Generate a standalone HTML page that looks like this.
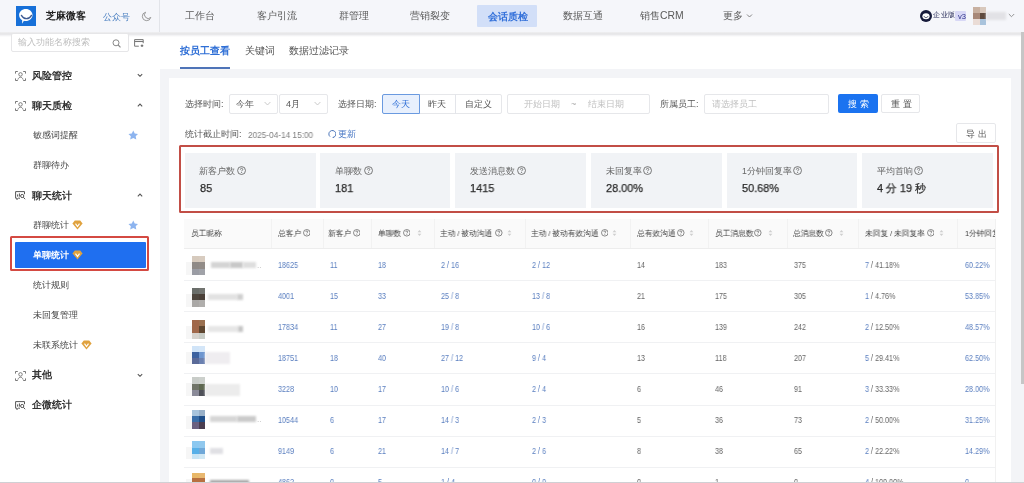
<!DOCTYPE html><html><head><meta charset="utf-8"><style>
*{box-sizing:border-box;margin:0;padding:0}
html,body{width:1024px;height:483px;overflow:hidden;background:#fff;font-family:"Liberation Sans",sans-serif;color:#333}
.a{position:absolute;white-space:nowrap;line-height:1;will-change:transform}
.r{position:absolute}
#hdr{position:absolute;left:0;top:0;width:1024px;height:32px;background:#f5f6fa}
#hsh{position:absolute;left:0;top:31.5px;width:1024px;height:5px;background:linear-gradient(rgba(225,225,228,0.5) 0%,#e4e4e6 40%,rgba(235,235,238,0.6) 70%,rgba(255,255,255,0) 100%)}
#side{position:absolute;left:0;top:32px;width:160px;height:451px;background:#fff}
#tabs{position:absolute;left:160px;top:32px;width:864px;height:37px;background:#fff}
#gray{position:absolute;left:160px;top:69px;width:864px;height:414px;background:#f3f4f7}
#card{position:absolute;left:169px;top:78px;width:842px;height:410px;background:#fff}
#sb{display:none}
#thumb{position:absolute;left:1021px;top:32px;width:3px;height:352px;background:#c6c6c6}
#bot{position:absolute;left:0;top:481.5px;width:1024px;height:1.5px;background:#d0d0d4}
.nav{font-size:10.4px;color:#5a5a5a}
.grp{font-size:10px;font-weight:600;color:#333}
.sub{font-size:9px;color:#474747}
.lbl{font-size:9px;color:#555}
.box{position:absolute;border:1px solid #e6e7ea;border-radius:2px;background:#fff}
.stat{position:absolute;width:130.5px;height:55px;background:#f1f3f6}
.stl{font-size:8.7px;color:#666}
.stv{font-size:11.2px;color:#2a2a2a;transform:scaleX(0.975);transform-origin:0 0;-webkit-text-stroke:0.25px #2a2a2a}
.th{font-size:7.6px;color:#3c3c3c;font-weight:500;transform:scaleX(0.965);transform-origin:0 0}
.td{font-size:8.2px;color:#666;transform:scaleX(0.88);transform-origin:0 0}
.bl{color:#5a7fc0}
</style></head><body>
<div id="hdr"></div><div id="side"></div><div id="tabs"></div><div id="gray"></div><div id="card"></div>
<svg class="r" style="left:16px;top:6px" width="20" height="20" viewBox="0 0 20 20">
<rect width="20" height="20" fill="#1770d8"/>
<path d="M9.8 3c3.7 0 6.7 2.7 6.7 6s-3 6-6.7 6c-.7 0-1.3-.1-1.9-.3L6.1 17.8l.1-3.6C4.3 13.1 3.1 11.2 3.1 9c0-3.3 3-6 6.7-6z" fill="#fff"/>
<path d="M5.4 9.4c1.3 2.3 3.1 3.3 5 3.3s3.8-1 5.1-3.3" stroke="#3d5a92" stroke-width="1.3" fill="none" stroke-linecap="round"/>
</svg>
<div class="a grp" style="left:46px;top:10.5px;font-size:10px;color:#222">芝麻微客</div>
<div class="a " style="left:103px;top:12.7px;font-size:8.5px;color:#4a7fc0">公众号</div>
<svg class="r" style="left:141px;top:11px" width="11" height="11" viewBox="0 0 11 11">
<path d="M4.6 1.2A4.3 4.3 0 1 0 9.8 6.4 3.4 3.4 0 0 1 4.6 1.2z" fill="none" stroke="#9a9a9a" stroke-width="1"/>
</svg>
<div class="r" style="left:159px;top:0;width:1px;height:32px;background:#e2e4e9"></div>
<div class="r" style="left:477px;top:5.2px;width:60.4px;height:21.6px;background:#d2dff8;border-radius:1px"></div>
<div class="a nav" style="left:185.1px;top:11.2px;">工作台</div>
<div class="a nav" style="left:256.7px;top:11.2px;">客户引流</div>
<div class="a nav" style="left:338.5px;top:11.2px;">群管理</div>
<div class="a nav" style="left:410.4px;top:11.2px;">营销裂变</div>
<div class="a nav" style="left:488px;top:11.5px;color:#3572da;font-weight:bold;font-size:10px">会话质检</div>
<div class="a nav" style="left:563.4000000000001px;top:11.2px;">数据互通</div>
<div class="a nav" style="left:640.4000000000001px;top:11.2px;">销售CRM</div>
<div class="a nav" style="left:722.5px;top:11.2px;">更多</div>
<svg class="r" style="left:746px;top:13px" width="7" height="6" viewBox="0 0 7 6"><path d="M1 1.5l2.5 2.5L6 1.5" fill="none" stroke="#777" stroke-width="0.9"/></svg>
<svg class="r" style="left:920px;top:10px" width="12" height="12" viewBox="0 0 12 12">
<circle cx="6" cy="6" r="6" fill="#161a3a"/><ellipse cx="6" cy="6.2" rx="3.6" ry="3" fill="#fff"/>
<path d="M3.9 6.2c.6 1 1.3 1.4 2.1 1.4s1.5-.4 2.1-1.4" stroke="#161a3a" stroke-width=".8" fill="none"/></svg>
<div class="a " style="left:933.2px;top:12.3px;font-size:6.8px;color:#1c2050;font-weight:500;letter-spacing:0.55px">企业版</div>
<div class="r" style="left:955px;top:11.1px;width:11.2px;height:10.1px;background:#d8d8f6;border-radius:1px"></div>
<div class="a " style="left:957.8px;top:12.6px;font-size:7.6px;color:#2c3088">v3</div>
<div class="r" style="left:973px;top:7px;width:13px;height:18px;overflow:hidden;filter:blur(0.4px)">
<div class="r" style="left:0;top:0;width:7px;height:6px;background:#c8b0a0"></div>
<div class="r" style="left:7px;top:0;width:6px;height:6px;background:#d8c8bc"></div>
<div class="r" style="left:0;top:6px;width:7px;height:6px;background:#a88878"></div>
<div class="r" style="left:7px;top:6px;width:6px;height:6px;background:#5e4a3e"></div>
<div class="r" style="left:0;top:12px;width:7px;height:6px;background:#eadcd6"></div>
<div class="r" style="left:7px;top:12px;width:6px;height:6px;background:#a9c3dc"></div>
</div>
<div class="r" style="left:986px;top:12px;width:20px;height:8px;background:#e2e2e6;filter:blur(1px)"></div>
<svg class="r" style="left:1008px;top:13px" width="7" height="5" viewBox="0 0 7 5"><path d="M.8 1l2.7 2.7L6.2 1" fill="none" stroke="#888" stroke-width="0.9"/></svg>
<div id="hsh"></div>
<div class="box" style="left:11.2px;top:33px;width:117.4px;height:19.4px;border-color:#e6e6e8"></div>
<div class="a " style="left:18.4px;top:38px;font-size:8.8px;color:#bdbdbd">输入功能名称搜索</div>
<svg class="r" style="left:112px;top:39px" width="10" height="9" viewBox="0 0 10 9">
<circle cx="4" cy="3.8" r="3" fill="none" stroke="#888" stroke-width="1"/><path d="M6.2 6l2.3 2.3" stroke="#888" stroke-width="1.1"/></svg>
<svg class="r" style="left:133.5px;top:38.6px" width="10" height="8" viewBox="0 0 10 8"><path d="M4.8 7.2H.6V.6h8.6v3.6" fill="none" stroke="#777" stroke-width="1"/><path d="M.6 2.5h8.6" stroke="#777" stroke-width="1.1"/><path d="M8 5.4v2.6M6.7 6.7h2.6" stroke="#666" stroke-width="1.1"/></svg>
<svg class="r" style="left:14.5px;top:70.5px" width="11" height="10" viewBox="0 0 11 10">
<path d="M.5 2.6V.5h2.3M8.2.5h2.3v2.1M.5 7.4v2.1h2.3M8.2 9.5h2.3V7.4" fill="none" stroke="#6a6a6a" stroke-width="0.9"/>
<circle cx="5.5" cy="3.4" r="1.75" fill="none" stroke="#6a6a6a" stroke-width="0.85"/>
<path d="M2.9 8.6c.5-1.6 1.5-2.4 2.6-2.4s2.1.8 2.6 2.4" fill="none" stroke="#6a6a6a" stroke-width="0.85"/></svg>
<div class="a grp" style="left:32.3px;top:70.8px;">风险管控</div>
<svg class="r" style="left:137px;top:72.6px" width="6" height="4.5" viewBox="0 0 6 4.5"><path d="M.8 1.1L3 3.3l2.2-2.2" fill="none" stroke="#555" stroke-width="1.05"/></svg>
<svg class="r" style="left:14.5px;top:100.5px" width="11" height="10" viewBox="0 0 11 10">
<path d="M.5 2.6V.5h2.3M8.2.5h2.3v2.1M.5 7.4v2.1h2.3M8.2 9.5h2.3V7.4" fill="none" stroke="#6a6a6a" stroke-width="0.9"/>
<circle cx="5.5" cy="3.4" r="1.75" fill="none" stroke="#6a6a6a" stroke-width="0.85"/>
<path d="M2.9 8.6c.5-1.6 1.5-2.4 2.6-2.4s2.1.8 2.6 2.4" fill="none" stroke="#6a6a6a" stroke-width="0.85"/></svg>
<div class="a grp" style="left:32.3px;top:101.2px;">聊天质检</div>
<svg class="r" style="left:137px;top:103.2px" width="6" height="4.5" viewBox="0 0 6 4.5"><path d="M.8 3.3L3 1.1l2.2 2.2" fill="none" stroke="#555" stroke-width="1.05"/></svg>
<div class="a sub" style="left:32.5px;top:131.3px;">敏感词提醒</div>
<svg class="r" style="left:127.8px;top:130.2px" width="10.5" height="10.5" viewBox="0 0 10 10">
<path d="M5 .4l1.4 2.9 3.2.4-2.3 2.2.6 3.2L5 7.6 2.1 9.1l.6-3.2L.4 3.7l3.2-.4z" fill="#8db4ef"/></svg>
<div class="a sub" style="left:32.5px;top:161.3px;">群聊待办</div>
<svg class="r" style="left:14.8px;top:190.5px" width="11" height="9" viewBox="0 0 11 9">
<path d="M9.5 3.2V.6H.6v6.6h1.2v1.4l1.6-1.4h1.6" fill="none" stroke="#555" stroke-width="1"/>
<path d="M2.6 3.4v2.2M4.4 2.4v3.2" stroke="#555" stroke-width="1"/>
<circle cx="7.2" cy="5" r="1.6" fill="none" stroke="#555" stroke-width="1"/><path d="M8.3 6.2l1.8 2" stroke="#555" stroke-width="1"/></svg>
<div class="a grp" style="left:32.3px;top:190.8px;">聊天统计</div>
<svg class="r" style="left:137px;top:193.2px" width="6" height="4.5" viewBox="0 0 6 4.5"><path d="M.8 3.3L3 1.1l2.2 2.2" fill="none" stroke="#555" stroke-width="1.05"/></svg>
<div class="a sub" style="left:32.5px;top:221.2px;">群聊统计</div>
<svg class="r" style="left:71.5px;top:219.5px" width="11" height="10" viewBox="0 0 11 10">
<path d="M2.8.6h5.4l2.4 2.8-5.1 6-5.1-6z" fill="#e0a23e"/>
<path d="M3.5 3.6l2 3 2-3" fill="none" stroke="#fff" stroke-width="1.1"/></svg>
<svg class="r" style="left:127.8px;top:220.2px" width="10.5" height="10.5" viewBox="0 0 10 10">
<path d="M5 .4l1.4 2.9 3.2.4-2.3 2.2.6 3.2L5 7.6 2.1 9.1l.6-3.2L.4 3.7l3.2-.4z" fill="#8db4ef"/></svg>
<div class="r" style="left:10px;top:236.3px;width:139px;height:35px;border:2px solid #d44a42;border-radius:1.5px"></div>
<div class="r" style="left:15px;top:242.4px;width:130.6px;height:25.2px;background:#1f6ff0;border-radius:1px"></div>
<div class="a " style="left:32.5px;top:250.8px;font-size:9px;color:#fff;font-weight:bold">单聊统计</div>
<svg class="r" style="left:71.5px;top:249.5px" width="11" height="10" viewBox="0 0 11 10">
<path d="M2.8.6h5.4l2.4 2.8-5.1 6-5.1-6z" fill="#e0a23e"/>
<path d="M3.5 3.6l2 3 2-3" fill="none" stroke="#fff" stroke-width="1.1"/></svg>
<div class="a sub" style="left:32.7px;top:280.5px;">统计规则</div>
<div class="a sub" style="left:32.7px;top:310.5px;">未回复管理</div>
<div class="a sub" style="left:32.7px;top:340.5px;">未联系统计</div>
<svg class="r" style="left:80.5px;top:339.8px" width="11" height="10" viewBox="0 0 11 10">
<path d="M2.8.6h5.4l2.4 2.8-5.1 6-5.1-6z" fill="#e0a23e"/>
<path d="M3.5 3.6l2 3 2-3" fill="none" stroke="#fff" stroke-width="1.1"/></svg>
<svg class="r" style="left:14.5px;top:370.5px" width="11" height="10" viewBox="0 0 11 10">
<path d="M.5 2.6V.5h2.3M8.2.5h2.3v2.1M.5 7.4v2.1h2.3M8.2 9.5h2.3V7.4" fill="none" stroke="#6a6a6a" stroke-width="0.9"/>
<circle cx="5.5" cy="3.4" r="1.75" fill="none" stroke="#6a6a6a" stroke-width="0.85"/>
<path d="M2.9 8.6c.5-1.6 1.5-2.4 2.6-2.4s2.1.8 2.6 2.4" fill="none" stroke="#6a6a6a" stroke-width="0.85"/></svg>
<div class="a grp" style="left:32.3px;top:370px;">其他</div>
<svg class="r" style="left:137px;top:372.6px" width="6" height="4.5" viewBox="0 0 6 4.5"><path d="M.8 1.1L3 3.3l2.2-2.2" fill="none" stroke="#555" stroke-width="1.05"/></svg>
<svg class="r" style="left:14.8px;top:400.5px" width="11" height="9" viewBox="0 0 11 9">
<path d="M9.5 3.2V.6H.6v6.6h1.2v1.4l1.6-1.4h1.6" fill="none" stroke="#555" stroke-width="1"/>
<path d="M2.6 3.4v2.2M4.4 2.4v3.2" stroke="#555" stroke-width="1"/>
<circle cx="7.2" cy="5" r="1.6" fill="none" stroke="#555" stroke-width="1"/><path d="M8.3 6.2l1.8 2" stroke="#555" stroke-width="1"/></svg>
<div class="a grp" style="left:32.3px;top:400px;">企微统计</div>
<div class="a " style="left:179.8px;top:46.2px;font-size:10.2px;color:#2f6fd6;font-weight:bold">按员工查看</div>
<div class="r" style="left:179.6px;top:67.4px;width:50.2px;height:1.7px;background:#4f74b8"></div>
<div class="a " style="left:244.6px;top:46.2px;font-size:10.2px;color:#555">关键词</div>
<div class="a " style="left:289.3px;top:46.2px;font-size:10.2px;color:#555">数据过滤记录</div>
<div class="a lbl" style="left:185px;top:100px;">选择时间:</div>
<div class="box" style="left:228.5px;top:94px;width:49px;height:19.5px"></div>
<div class="a " style="left:235.6px;top:100px;font-size:9px;color:#555">今年</div>
<svg class="r" style="left:264px;top:101px" width="7" height="5" viewBox="0 0 7 5"><path d="M.6 1l2.9 3 2.9-3" fill="none" stroke="#c4c4c4" stroke-width=".9"/></svg>
<div class="box" style="left:278.8px;top:94px;width:49px;height:19.5px"></div>
<div class="a " style="left:285.8px;top:100px;font-size:9px;color:#555">4月</div>
<svg class="r" style="left:313.5px;top:101px" width="7" height="5" viewBox="0 0 7 5"><path d="M.6 1l2.9 3 2.9-3" fill="none" stroke="#c4c4c4" stroke-width=".9"/></svg>
<div class="a lbl" style="left:338.3px;top:100px;">选择日期:</div>
<div class="box" style="left:382px;top:94px;width:119.5px;height:19.5px"></div>
<div class="r" style="left:455px;top:94px;width:1px;height:19.5px;background:#e3e5ea"></div>
<div class="r" style="left:382px;top:94px;width:37.5px;height:19.5px;background:#e8f0fd;border:1px solid #6a9ae0;border-radius:2px 0 0 2px"></div>
<div class="a " style="left:391.5px;top:100px;font-size:9px;color:#2f6fd6">今天</div>
<div class="a " style="left:428px;top:100px;font-size:9px;color:#555">昨天</div>
<div class="a " style="left:465px;top:100px;font-size:9px;color:#555">自定义</div>
<div class="box" style="left:506.6px;top:93.6px;width:143px;height:20px"></div>
<div class="a " style="left:523.8px;top:100px;font-size:9px;color:#c0c0c0">开始日期</div>
<div class="a " style="left:570.5px;top:99.5px;font-size:9px;color:#aaa">~</div>
<div class="a " style="left:587.8px;top:100px;font-size:9px;color:#c0c0c0">结束日期</div>
<div class="a lbl" style="left:659.6px;top:100px;">所属员工:</div>
<div class="box" style="left:704px;top:94px;width:124.5px;height:19.7px"></div>
<div class="a " style="left:711.5px;top:100px;font-size:9px;color:#c0c0c0">请选择员工</div>
<div class="r" style="left:838.3px;top:94px;width:39.7px;height:19.3px;background:#1b73f0;border-radius:2px"></div>
<div class="a " style="left:848px;top:99.5px;font-size:9px;color:#fff;letter-spacing:0.3px">搜 索</div>
<div class="box" style="left:881px;top:94px;width:38.8px;height:19.3px"></div>
<div class="a " style="left:890.5px;top:99.5px;font-size:9px;color:#555;letter-spacing:0.3px">重 置</div>
<div class="a " style="left:184.8px;top:130px;font-size:9px;color:#555">统计截止时间:</div>
<div class="a " style="left:247.5px;top:130.6px;font-size:8.6px;color:#808080;transform:scaleX(0.96);transform-origin:0 0">2025-04-14 15:00</div>
<svg class="r" style="left:327.8px;top:129.8px" width="8.5" height="8.5" viewBox="0 0 8.5 8.5"><path d="M2 6.6A3.5 3.5 0 1 1 5.6 7.3" fill="none" stroke="#4a74b8" stroke-width="1"/><path d="M5.2 6.2l.9 1.7-1.7.3z" fill="#4a74b8"/></svg>
<div class="a " style="left:338px;top:130px;font-size:9px;color:#4676c4">更新</div>
<div class="box" style="left:956.3px;top:123.3px;width:39.5px;height:20.2px"></div>
<div class="a " style="left:966.4px;top:129.8px;font-size:9px;color:#555;letter-spacing:0.3px">导 出</div>
<div class="r" style="left:179.3px;top:144.9px;width:820.1px;height:68.2px;border:2.1px solid #c24e46;border-radius:1.5px"></div>
<div class="stat" style="left:185px;top:153.4px"></div>
<div class="a stl" style="left:198.5px;top:167px;">新客户数</div>
<svg class="r" style="left:236.8px;top:166.1px" width="9.1" height="9.1" viewBox="0 0 9 9"><circle cx="4.5" cy="4.5" r="3.9" fill="none" stroke="#5c5c5c" stroke-width=".8"/><path d="M3.3 3.6c0-.8.5-1.3 1.2-1.3s1.2.5 1.2 1.1c0 .8-1.1.9-1.1 1.8" fill="none" stroke="#5c5c5c" stroke-width=".8"/><circle cx="4.6" cy="6.5" r=".5" fill="#5c5c5c"/></svg>
<div class="a stv" style="left:199.6px;top:182.6px;">85</div>
<div class="stat" style="left:319.9px;top:153.4px"></div>
<div class="a stl" style="left:335.2px;top:167px;">单聊数</div>
<svg class="r" style="left:364.0px;top:166.1px" width="9.1" height="9.1" viewBox="0 0 9 9"><circle cx="4.5" cy="4.5" r="3.9" fill="none" stroke="#5c5c5c" stroke-width=".8"/><path d="M3.3 3.6c0-.8.5-1.3 1.2-1.3s1.2.5 1.2 1.1c0 .8-1.1.9-1.1 1.8" fill="none" stroke="#5c5c5c" stroke-width=".8"/><circle cx="4.6" cy="6.5" r=".5" fill="#5c5c5c"/></svg>
<div class="a stv" style="left:335.3px;top:182.6px;">181</div>
<div class="stat" style="left:455.3px;top:153.4px"></div>
<div class="a stl" style="left:470.3px;top:167px;">发送消息数</div>
<svg class="r" style="left:516.9px;top:166.1px" width="9.1" height="9.1" viewBox="0 0 9 9"><circle cx="4.5" cy="4.5" r="3.9" fill="none" stroke="#5c5c5c" stroke-width=".8"/><path d="M3.3 3.6c0-.8.5-1.3 1.2-1.3s1.2.5 1.2 1.1c0 .8-1.1.9-1.1 1.8" fill="none" stroke="#5c5c5c" stroke-width=".8"/><circle cx="4.6" cy="6.5" r=".5" fill="#5c5c5c"/></svg>
<div class="a stv" style="left:470.40000000000003px;top:182.6px;">1415</div>
<div class="stat" style="left:591.1px;top:153.4px"></div>
<div class="a stl" style="left:606.0px;top:167px;">未回复率</div>
<svg class="r" style="left:643.3px;top:166.1px" width="9.1" height="9.1" viewBox="0 0 9 9"><circle cx="4.5" cy="4.5" r="3.9" fill="none" stroke="#5c5c5c" stroke-width=".8"/><path d="M3.3 3.6c0-.8.5-1.3 1.2-1.3s1.2.5 1.2 1.1c0 .8-1.1.9-1.1 1.8" fill="none" stroke="#5c5c5c" stroke-width=".8"/><circle cx="4.6" cy="6.5" r=".5" fill="#5c5c5c"/></svg>
<div class="a stv" style="left:606.0999999999999px;top:182.6px;">28.00%</div>
<div class="stat" style="left:726.5px;top:153.4px"></div>
<div class="a stl" style="left:741.8000000000001px;top:167px;">1分钟回复率</div>
<svg class="r" style="left:792.5999999999999px;top:166.1px" width="9.1" height="9.1" viewBox="0 0 9 9"><circle cx="4.5" cy="4.5" r="3.9" fill="none" stroke="#5c5c5c" stroke-width=".8"/><path d="M3.3 3.6c0-.8.5-1.3 1.2-1.3s1.2.5 1.2 1.1c0 .8-1.1.9-1.1 1.8" fill="none" stroke="#5c5c5c" stroke-width=".8"/><circle cx="4.6" cy="6.5" r=".5" fill="#5c5c5c"/></svg>
<div class="a stv" style="left:741.9px;top:182.6px;">50.68%</div>
<div class="stat" style="left:862.1px;top:153.4px"></div>
<div class="a stl" style="left:877.0px;top:167px;">平均首响</div>
<svg class="r" style="left:913.8px;top:166.1px" width="9.1" height="9.1" viewBox="0 0 9 9"><circle cx="4.5" cy="4.5" r="3.9" fill="none" stroke="#5c5c5c" stroke-width=".8"/><path d="M3.3 3.6c0-.8.5-1.3 1.2-1.3s1.2.5 1.2 1.1c0 .8-1.1.9-1.1 1.8" fill="none" stroke="#5c5c5c" stroke-width=".8"/><circle cx="4.6" cy="6.5" r=".5" fill="#5c5c5c"/></svg>
<div class="a stv" style="left:877.0999999999999px;top:182.6px;">4 分 19 秒</div>
<div class="r" style="left:184px;top:218.8px;width:811.3px;height:30.2px;background:#fafafa;border-bottom:1px solid #ededed"></div>
<div class="r" style="left:271.3px;top:219px;width:1px;height:29px;background:#f2f2f2"></div>
<div class="r" style="left:322.5px;top:219px;width:1px;height:29px;background:#f2f2f2"></div>
<div class="r" style="left:371.2px;top:219px;width:1px;height:29px;background:#f2f2f2"></div>
<div class="r" style="left:434.1px;top:219px;width:1px;height:29px;background:#f2f2f2"></div>
<div class="r" style="left:525px;top:219px;width:1px;height:29px;background:#f2f2f2"></div>
<div class="r" style="left:630.3px;top:219px;width:1px;height:29px;background:#f2f2f2"></div>
<div class="r" style="left:708.4px;top:219px;width:1px;height:29px;background:#f2f2f2"></div>
<div class="r" style="left:787px;top:219px;width:1px;height:29px;background:#f2f2f2"></div>
<div class="r" style="left:857.6px;top:219px;width:1px;height:29px;background:#f2f2f2"></div>
<div class="r" style="left:957px;top:219px;width:1px;height:29px;background:#f2f2f2"></div>
<div class="a th" style="left:190.7px;top:229.9px;">员工昵称</div>
<div class="a th" style="left:278.2px;top:229.9px;">总客户</div>
<svg class="r" style="left:302.5px;top:229.3px" width="7.6" height="7.6" viewBox="0 0 9 9"><circle cx="4.5" cy="4.5" r="3.9" fill="none" stroke="#555" stroke-width=".8"/><path d="M3.3 3.6c0-.8.5-1.3 1.2-1.3s1.2.5 1.2 1.1c0 .8-1.1.9-1.1 1.8" fill="none" stroke="#555" stroke-width=".8"/><circle cx="4.6" cy="6.5" r=".5" fill="#555"/></svg>
<div class="a th" style="left:328.0px;top:229.9px;">新客户</div>
<svg class="r" style="left:352.7px;top:229.3px" width="7.6" height="7.6" viewBox="0 0 9 9"><circle cx="4.5" cy="4.5" r="3.9" fill="none" stroke="#555" stroke-width=".8"/><path d="M3.3 3.6c0-.8.5-1.3 1.2-1.3s1.2.5 1.2 1.1c0 .8-1.1.9-1.1 1.8" fill="none" stroke="#555" stroke-width=".8"/><circle cx="4.6" cy="6.5" r=".5" fill="#555"/></svg>
<div class="a th" style="left:378.09999999999997px;top:229.9px;">单聊数</div>
<svg class="r" style="left:402.8px;top:229.3px" width="7.6" height="7.6" viewBox="0 0 9 9"><circle cx="4.5" cy="4.5" r="3.9" fill="none" stroke="#555" stroke-width=".8"/><path d="M3.3 3.6c0-.8.5-1.3 1.2-1.3s1.2.5 1.2 1.1c0 .8-1.1.9-1.1 1.8" fill="none" stroke="#555" stroke-width=".8"/><circle cx="4.6" cy="6.5" r=".5" fill="#555"/></svg>
<svg class="r" style="left:416.8px;top:229px" width="5" height="8" viewBox="0 0 5 8"><path d="M.6 3.2L2.5 1l1.9 2.2z" fill="#cfcfcf"/><path d="M.6 4.8l1.9 2.2 1.9-2.2z" fill="#cfcfcf"/></svg>
<div class="a th" style="left:440.4px;top:229.9px;">主动 / 被动沟通</div>
<svg class="r" style="left:495.1px;top:229.3px" width="7.6" height="7.6" viewBox="0 0 9 9"><circle cx="4.5" cy="4.5" r="3.9" fill="none" stroke="#555" stroke-width=".8"/><path d="M3.3 3.6c0-.8.5-1.3 1.2-1.3s1.2.5 1.2 1.1c0 .8-1.1.9-1.1 1.8" fill="none" stroke="#555" stroke-width=".8"/><circle cx="4.6" cy="6.5" r=".5" fill="#555"/></svg>
<svg class="r" style="left:507.3px;top:229px" width="5" height="8" viewBox="0 0 5 8"><path d="M.6 3.2L2.5 1l1.9 2.2z" fill="#cfcfcf"/><path d="M.6 4.8l1.9 2.2 1.9-2.2z" fill="#cfcfcf"/></svg>
<div class="a th" style="left:530.7px;top:229.9px;">主动 / 被动有效沟通</div>
<svg class="r" style="left:600.6px;top:229.3px" width="7.6" height="7.6" viewBox="0 0 9 9"><circle cx="4.5" cy="4.5" r="3.9" fill="none" stroke="#555" stroke-width=".8"/><path d="M3.3 3.6c0-.8.5-1.3 1.2-1.3s1.2.5 1.2 1.1c0 .8-1.1.9-1.1 1.8" fill="none" stroke="#555" stroke-width=".8"/><circle cx="4.6" cy="6.5" r=".5" fill="#555"/></svg>
<svg class="r" style="left:612.4px;top:229px" width="5" height="8" viewBox="0 0 5 8"><path d="M.6 3.2L2.5 1l1.9 2.2z" fill="#cfcfcf"/><path d="M.6 4.8l1.9 2.2 1.9-2.2z" fill="#cfcfcf"/></svg>
<div class="a th" style="left:637.0px;top:229.9px;">总有效沟通</div>
<svg class="r" style="left:677.1px;top:229.3px" width="7.6" height="7.6" viewBox="0 0 9 9"><circle cx="4.5" cy="4.5" r="3.9" fill="none" stroke="#555" stroke-width=".8"/><path d="M3.3 3.6c0-.8.5-1.3 1.2-1.3s1.2.5 1.2 1.1c0 .8-1.1.9-1.1 1.8" fill="none" stroke="#555" stroke-width=".8"/><circle cx="4.6" cy="6.5" r=".5" fill="#555"/></svg>
<svg class="r" style="left:689.3px;top:229px" width="5" height="8" viewBox="0 0 5 8"><path d="M.6 3.2L2.5 1l1.9 2.2z" fill="#cfcfcf"/><path d="M.6 4.8l1.9 2.2 1.9-2.2z" fill="#cfcfcf"/></svg>
<div class="a th" style="left:715.2px;top:229.9px;">员工消息数</div>
<svg class="r" style="left:754px;top:229.3px" width="7.6" height="7.6" viewBox="0 0 9 9"><circle cx="4.5" cy="4.5" r="3.9" fill="none" stroke="#555" stroke-width=".8"/><path d="M3.3 3.6c0-.8.5-1.3 1.2-1.3s1.2.5 1.2 1.1c0 .8-1.1.9-1.1 1.8" fill="none" stroke="#555" stroke-width=".8"/><circle cx="4.6" cy="6.5" r=".5" fill="#555"/></svg>
<svg class="r" style="left:768.2px;top:229px" width="5" height="8" viewBox="0 0 5 8"><path d="M.6 3.2L2.5 1l1.9 2.2z" fill="#cfcfcf"/><path d="M.6 4.8l1.9 2.2 1.9-2.2z" fill="#cfcfcf"/></svg>
<div class="a th" style="left:793.3000000000001px;top:229.9px;">总消息数</div>
<svg class="r" style="left:825.3px;top:229.3px" width="7.6" height="7.6" viewBox="0 0 9 9"><circle cx="4.5" cy="4.5" r="3.9" fill="none" stroke="#555" stroke-width=".8"/><path d="M3.3 3.6c0-.8.5-1.3 1.2-1.3s1.2.5 1.2 1.1c0 .8-1.1.9-1.1 1.8" fill="none" stroke="#555" stroke-width=".8"/><circle cx="4.6" cy="6.5" r=".5" fill="#555"/></svg>
<svg class="r" style="left:839px;top:229px" width="5" height="8" viewBox="0 0 5 8"><path d="M.6 3.2L2.5 1l1.9 2.2z" fill="#cfcfcf"/><path d="M.6 4.8l1.9 2.2 1.9-2.2z" fill="#cfcfcf"/></svg>
<div class="a th" style="left:864.7px;top:229.9px;">未回复 / 未回复率</div>
<svg class="r" style="left:926.5px;top:229.3px" width="7.6" height="7.6" viewBox="0 0 9 9"><circle cx="4.5" cy="4.5" r="3.9" fill="none" stroke="#555" stroke-width=".8"/><path d="M3.3 3.6c0-.8.5-1.3 1.2-1.3s1.2.5 1.2 1.1c0 .8-1.1.9-1.1 1.8" fill="none" stroke="#555" stroke-width=".8"/><circle cx="4.6" cy="6.5" r=".5" fill="#555"/></svg>
<svg class="r" style="left:939.2px;top:229px" width="5" height="8" viewBox="0 0 5 8"><path d="M.6 3.2L2.5 1l1.9 2.2z" fill="#cfcfcf"/><path d="M.6 4.8l1.9 2.2 1.9-2.2z" fill="#cfcfcf"/></svg>
<div class="a th" style="left:964.9000000000001px;top:229.9px;">1分钟回复率</div>
<div class="r" style="left:995.3px;top:215px;width:16px;height:270px;background:#fff"></div>
<div class="r" style="left:995.3px;top:219px;width:1px;height:264px;background:#f1f1f1"></div>
<div class="r" style="left:184px;top:280.1px;width:811.3px;height:1px;background:#f0f1f3"></div>
<div class="a td bl" style="left:278.3px;top:261.5px;">18625</div>
<div class="a td bl" style="left:329.5px;top:261.5px;">11</div>
<div class="a td bl" style="left:378.2px;top:261.5px;">18</div>
<div class="a td bl" style="left:441.1px;top:261.5px;">2 / 16</div>
<div class="a td bl" style="left:532px;top:261.5px;">2 / 12</div>
<div class="a td" style="left:637.3px;top:261.5px;">14</div>
<div class="a td" style="left:715.4px;top:261.5px;">183</div>
<div class="a td" style="left:794px;top:261.5px;">375</div>
<div class="a td" style="left:864.6px;top:261.5px"><span class="bl">7</span> / 41.18%</div>
<div class="a td bl" style="left:965px;top:261.5px;">60.22%</div>
<div class="r" style="left:184px;top:311.23px;width:811.3px;height:1px;background:#f0f1f3"></div>
<div class="a td bl" style="left:278.3px;top:292.63px;">4001</div>
<div class="a td bl" style="left:329.5px;top:292.63px;">15</div>
<div class="a td bl" style="left:378.2px;top:292.63px;">33</div>
<div class="a td bl" style="left:441.1px;top:292.63px;">25 / 8</div>
<div class="a td bl" style="left:532px;top:292.63px;">13 / 8</div>
<div class="a td" style="left:637.3px;top:292.63px;">21</div>
<div class="a td" style="left:715.4px;top:292.63px;">175</div>
<div class="a td" style="left:794px;top:292.63px;">305</div>
<div class="a td" style="left:864.6px;top:292.63px"><span class="bl">1</span> / 4.76%</div>
<div class="a td bl" style="left:965px;top:292.63px;">53.85%</div>
<div class="r" style="left:184px;top:342.36px;width:811.3px;height:1px;background:#f0f1f3"></div>
<div class="a td bl" style="left:278.3px;top:323.76px;">17834</div>
<div class="a td bl" style="left:329.5px;top:323.76px;">11</div>
<div class="a td bl" style="left:378.2px;top:323.76px;">27</div>
<div class="a td bl" style="left:441.1px;top:323.76px;">19 / 8</div>
<div class="a td bl" style="left:532px;top:323.76px;">10 / 6</div>
<div class="a td" style="left:637.3px;top:323.76px;">16</div>
<div class="a td" style="left:715.4px;top:323.76px;">139</div>
<div class="a td" style="left:794px;top:323.76px;">242</div>
<div class="a td" style="left:864.6px;top:323.76px"><span class="bl">2</span> / 12.50%</div>
<div class="a td bl" style="left:965px;top:323.76px;">48.57%</div>
<div class="r" style="left:184px;top:373.49px;width:811.3px;height:1px;background:#f0f1f3"></div>
<div class="a td bl" style="left:278.3px;top:354.89px;">18751</div>
<div class="a td bl" style="left:329.5px;top:354.89px;">18</div>
<div class="a td bl" style="left:378.2px;top:354.89px;">40</div>
<div class="a td bl" style="left:441.1px;top:354.89px;">27 / 12</div>
<div class="a td bl" style="left:532px;top:354.89px;">9 / 4</div>
<div class="a td" style="left:637.3px;top:354.89px;">13</div>
<div class="a td" style="left:715.4px;top:354.89px;">118</div>
<div class="a td" style="left:794px;top:354.89px;">207</div>
<div class="a td" style="left:864.6px;top:354.89px"><span class="bl">5</span> / 29.41%</div>
<div class="a td bl" style="left:965px;top:354.89px;">62.50%</div>
<div class="r" style="left:184px;top:404.62px;width:811.3px;height:1px;background:#f0f1f3"></div>
<div class="a td bl" style="left:278.3px;top:386.02px;">3228</div>
<div class="a td bl" style="left:329.5px;top:386.02px;">10</div>
<div class="a td bl" style="left:378.2px;top:386.02px;">17</div>
<div class="a td bl" style="left:441.1px;top:386.02px;">10 / 6</div>
<div class="a td bl" style="left:532px;top:386.02px;">2 / 4</div>
<div class="a td" style="left:637.3px;top:386.02px;">6</div>
<div class="a td" style="left:715.4px;top:386.02px;">46</div>
<div class="a td" style="left:794px;top:386.02px;">91</div>
<div class="a td" style="left:864.6px;top:386.02px"><span class="bl">3</span> / 33.33%</div>
<div class="a td bl" style="left:965px;top:386.02px;">28.00%</div>
<div class="r" style="left:184px;top:435.75px;width:811.3px;height:1px;background:#f0f1f3"></div>
<div class="a td bl" style="left:278.3px;top:417.15px;">10544</div>
<div class="a td bl" style="left:329.5px;top:417.15px;">6</div>
<div class="a td bl" style="left:378.2px;top:417.15px;">17</div>
<div class="a td bl" style="left:441.1px;top:417.15px;">14 / 3</div>
<div class="a td bl" style="left:532px;top:417.15px;">2 / 3</div>
<div class="a td" style="left:637.3px;top:417.15px;">5</div>
<div class="a td" style="left:715.4px;top:417.15px;">36</div>
<div class="a td" style="left:794px;top:417.15px;">73</div>
<div class="a td" style="left:864.6px;top:417.15px"><span class="bl">2</span> / 50.00%</div>
<div class="a td bl" style="left:965px;top:417.15px;">31.25%</div>
<div class="r" style="left:184px;top:466.88px;width:811.3px;height:1px;background:#f0f1f3"></div>
<div class="a td bl" style="left:278.3px;top:448.28px;">9149</div>
<div class="a td bl" style="left:329.5px;top:448.28px;">6</div>
<div class="a td bl" style="left:378.2px;top:448.28px;">21</div>
<div class="a td bl" style="left:441.1px;top:448.28px;">14 / 7</div>
<div class="a td bl" style="left:532px;top:448.28px;">2 / 6</div>
<div class="a td" style="left:637.3px;top:448.28px;">8</div>
<div class="a td" style="left:715.4px;top:448.28px;">38</div>
<div class="a td" style="left:794px;top:448.28px;">65</div>
<div class="a td" style="left:864.6px;top:448.28px"><span class="bl">2</span> / 22.22%</div>
<div class="a td bl" style="left:965px;top:448.28px;">14.29%</div>
<div class="r" style="left:184px;top:498.01px;width:811.3px;height:1px;background:#f0f1f3"></div>
<div class="a td bl" style="left:278.3px;top:479.40999999999997px;">4862</div>
<div class="a td bl" style="left:329.5px;top:479.40999999999997px;">0</div>
<div class="a td bl" style="left:378.2px;top:479.40999999999997px;">5</div>
<div class="a td bl" style="left:441.1px;top:479.40999999999997px;">1 / 4</div>
<div class="a td bl" style="left:532px;top:479.40999999999997px;">0 / 0</div>
<div class="a td" style="left:637.3px;top:479.40999999999997px;">0</div>
<div class="a td" style="left:715.4px;top:479.40999999999997px;">1</div>
<div class="a td" style="left:794px;top:479.40999999999997px;">0</div>
<div class="a td" style="left:864.6px;top:479.40999999999997px"><span class="bl">4</span> / 100.00%</div>
<div class="a td bl" style="left:965px;top:479.40999999999997px;">0</div>
<div class="r" style="left:192.0px;top:256.2px;width:6.5px;height:6px;background:#d6cabd;filter:blur(0.6px)"></div>
<div class="r" style="left:198.5px;top:256.2px;width:6.5px;height:6px;background:#d8ccc0;filter:blur(0.6px)"></div>
<div class="r" style="left:192.0px;top:262.2px;width:6.5px;height:6.6px;background:#8f8a87;filter:blur(0.6px)"></div>
<div class="r" style="left:198.5px;top:262.2px;width:6.5px;height:6.6px;background:#928c88;filter:blur(0.6px)"></div>
<div class="r" style="left:192.0px;top:268.8px;width:6.5px;height:6px;background:#9a9ca4;filter:blur(0.6px)"></div>
<div class="r" style="left:198.5px;top:268.8px;width:6.5px;height:6px;background:#a0a2a8;filter:blur(0.6px)"></div>
<div class="r" style="left:186px;top:262.2px;width:6px;height:12.600000000000023px;background:#f6f6f6"></div>
<div class="r" style="left:211px;top:262.2px;width:19px;height:6.0px;background:#d4d4d4;filter:blur(0.8px)"></div>
<div class="r" style="left:230px;top:262.2px;width:13px;height:6.0px;background:#c8c8c8;filter:blur(0.8px)"></div>
<div class="r" style="left:243px;top:262.2px;width:13px;height:6.0px;background:#dedede;filter:blur(0.8px)"></div>
<div class="a " style="left:257px;top:261.7px;font-size:8px;color:#aaa;transform:scaleX(0.9)">..</div>
<div class="r" style="left:192.0px;top:288px;width:6.5px;height:6px;background:#6a6e6a;filter:blur(0.6px)"></div>
<div class="r" style="left:198.5px;top:288px;width:6.5px;height:6px;background:#727470;filter:blur(0.6px)"></div>
<div class="r" style="left:192.0px;top:294px;width:6.5px;height:6px;background:#4e463e;filter:blur(0.6px)"></div>
<div class="r" style="left:198.5px;top:294px;width:6.5px;height:6px;background:#4a4038;filter:blur(0.6px)"></div>
<div class="r" style="left:192.0px;top:300px;width:6.5px;height:6.6px;background:#aaa8a6;filter:blur(0.6px)"></div>
<div class="r" style="left:198.5px;top:300px;width:6.5px;height:6.6px;background:#b0aeac;filter:blur(0.6px)"></div>
<div class="r" style="left:186px;top:294px;width:6px;height:12.600000000000023px;background:#f6f6f6"></div>
<div class="r" style="left:208px;top:294px;width:29px;height:6px;background:#e2e2e2;filter:blur(0.8px)"></div>
<div class="r" style="left:237px;top:294px;width:6px;height:6px;background:#cfcfcf;filter:blur(0.8px)"></div>
<div class="r" style="left:192.0px;top:320px;width:6.5px;height:6px;background:#a0684a;filter:blur(0.6px)"></div>
<div class="r" style="left:198.5px;top:320px;width:6.5px;height:6px;background:#9a7050;filter:blur(0.6px)"></div>
<div class="r" style="left:192.0px;top:326px;width:6.5px;height:6.6px;background:#a0684a;filter:blur(0.6px)"></div>
<div class="r" style="left:198.5px;top:326px;width:6.5px;height:6.6px;background:#5e4630;filter:blur(0.6px)"></div>
<div class="r" style="left:192.0px;top:332.6px;width:6.5px;height:6px;background:#d6d2cc;filter:blur(0.6px)"></div>
<div class="r" style="left:198.5px;top:332.6px;width:6.5px;height:6px;background:#c8ccc6;filter:blur(0.6px)"></div>
<div class="r" style="left:186px;top:326px;width:6px;height:12.600000000000023px;background:#f6f6f6"></div>
<div class="r" style="left:208px;top:326px;width:30px;height:6px;background:#e6e6e6;filter:blur(0.8px)"></div>
<div class="r" style="left:238px;top:326px;width:5px;height:6px;background:#c6c6c6;filter:blur(0.8px)"></div>
<div class="r" style="left:192.0px;top:345.8px;width:6.5px;height:6px;background:#d0e4f8;filter:blur(0.6px)"></div>
<div class="r" style="left:198.5px;top:345.8px;width:6.5px;height:6px;background:#d4e6f8;filter:blur(0.6px)"></div>
<div class="r" style="left:192.0px;top:351.8px;width:6.5px;height:6.3px;background:#3c62a0;filter:blur(0.6px)"></div>
<div class="r" style="left:198.5px;top:351.8px;width:6.5px;height:6.3px;background:#6e96d0;filter:blur(0.6px)"></div>
<div class="r" style="left:192.0px;top:358.1px;width:6.5px;height:6.3px;background:#5a6a98;filter:blur(0.6px)"></div>
<div class="r" style="left:198.5px;top:358.1px;width:6.5px;height:6.3px;background:#6a80b0;filter:blur(0.6px)"></div>
<div class="r" style="left:186px;top:351.8px;width:6px;height:12.600000000000023px;background:#f6f6f6"></div>
<div class="r" style="left:205px;top:352px;width:25px;height:12px;background:#efedf0;filter:blur(0.8px)"></div>
<div class="r" style="left:192.0px;top:377.2px;width:6.5px;height:6.8px;background:#c8ccc8;filter:blur(0.6px)"></div>
<div class="r" style="left:198.5px;top:377.2px;width:6.5px;height:6.8px;background:#ccd0cc;filter:blur(0.6px)"></div>
<div class="r" style="left:192.0px;top:384.0px;width:6.5px;height:6px;background:#707468;filter:blur(0.6px)"></div>
<div class="r" style="left:198.5px;top:384.0px;width:6.5px;height:6px;background:#5e6850;filter:blur(0.6px)"></div>
<div class="r" style="left:192.0px;top:390.0px;width:6.5px;height:6.4px;background:#8a8a98;filter:blur(0.6px)"></div>
<div class="r" style="left:198.5px;top:390.0px;width:6.5px;height:6.4px;background:#4e5058;filter:blur(0.6px)"></div>
<div class="r" style="left:186px;top:383.2px;width:6px;height:13.199999999999989px;background:#f6f6f6"></div>
<div class="r" style="left:205px;top:384px;width:35px;height:12px;background:#ececec;filter:blur(0.8px)"></div>
<div class="r" style="left:192.0px;top:409.6px;width:6.5px;height:6.4px;background:#a8c4dc;filter:blur(0.6px)"></div>
<div class="r" style="left:198.5px;top:409.6px;width:6.5px;height:6.4px;background:#98b0c8;filter:blur(0.6px)"></div>
<div class="r" style="left:192.0px;top:416.0px;width:6.5px;height:6px;background:#3a6ea8;filter:blur(0.6px)"></div>
<div class="r" style="left:198.5px;top:416.0px;width:6.5px;height:6px;background:#1e4e88;filter:blur(0.6px)"></div>
<div class="r" style="left:192.0px;top:422.0px;width:6.5px;height:6.8px;background:#6a6080;filter:blur(0.6px)"></div>
<div class="r" style="left:198.5px;top:422.0px;width:6.5px;height:6.8px;background:#4a3e50;filter:blur(0.6px)"></div>
<div class="r" style="left:186px;top:415.6px;width:6px;height:13.199999999999989px;background:#f6f6f6"></div>
<div class="r" style="left:210px;top:416px;width:27px;height:6px;background:#d6d6d6;filter:blur(0.8px)"></div>
<div class="r" style="left:237px;top:416px;width:19px;height:6px;background:#cacaca;filter:blur(0.8px)"></div>
<div class="a " style="left:257px;top:415.5px;font-size:8px;color:#aaa;transform:scaleX(0.9)">..</div>
<div class="r" style="left:192.0px;top:440.9px;width:6.5px;height:7px;background:#8cc8f0;filter:blur(0.6px)"></div>
<div class="r" style="left:198.5px;top:440.9px;width:6.5px;height:7px;background:#90c8ee;filter:blur(0.6px)"></div>
<div class="r" style="left:192.0px;top:447.9px;width:6.5px;height:6px;background:#58b0e8;filter:blur(0.6px)"></div>
<div class="r" style="left:198.5px;top:447.9px;width:6.5px;height:6px;background:#70a8d8;filter:blur(0.6px)"></div>
<div class="r" style="left:192.0px;top:453.9px;width:6.5px;height:5.5px;background:#c8e4f4;filter:blur(0.6px)"></div>
<div class="r" style="left:198.5px;top:453.9px;width:6.5px;height:5.5px;background:#d0e8f4;filter:blur(0.6px)"></div>
<div class="r" style="left:186px;top:446.9px;width:6px;height:12.5px;background:#f6f6f6"></div>
<div class="r" style="left:210.3px;top:448px;width:13.099999999999994px;height:6px;background:#e0e0e4;filter:blur(0.8px)"></div>
<div class="r" style="left:192.0px;top:473px;width:6.5px;height:5px;background:#e8b868;filter:blur(0.6px)"></div>
<div class="r" style="left:198.5px;top:473px;width:6.5px;height:5px;background:#e8b870;filter:blur(0.6px)"></div>
<div class="r" style="left:192.0px;top:478px;width:6.5px;height:6px;background:#b87040;filter:blur(0.6px)"></div>
<div class="r" style="left:198.5px;top:478px;width:6.5px;height:6px;background:#b87040;filter:blur(0.6px)"></div>
<div class="r" style="left:192.0px;top:484px;width:6.5px;height:6px;background:#b87040;filter:blur(0.6px)"></div>
<div class="r" style="left:198.5px;top:484px;width:6.5px;height:6px;background:#b87040;filter:blur(0.6px)"></div>
<div class="r" style="left:186px;top:479px;width:6px;height:11px;background:#f6f6f6"></div>
<div class="r" style="left:210px;top:480px;width:39px;height:6px;background:#a8a8a8;filter:blur(0.8px)"></div>
<div id="sb"></div><div id="thumb"></div>
<div id="bot"></div>
</body></html>
